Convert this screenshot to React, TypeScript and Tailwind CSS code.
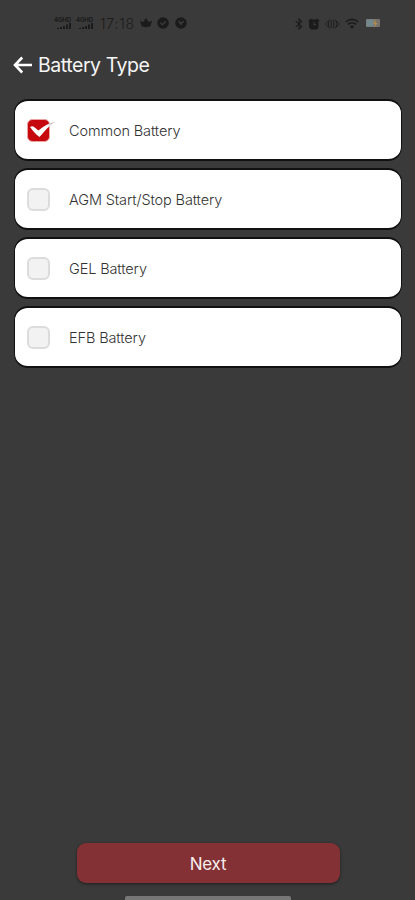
import React, { useState } from "react";

const BATTERY_TYPES = [
	{ id: "common", name: "Common Battery" },
	{ id: "agm", name: "AGM Start/Stop Battery" },
	{ id: "gel", name: "GEL Battery" },
	{ id: "efb", name: "EFB Battery" },
];

function SignalIcon({ label }: { label: string }) {
	return (
		<span className="flex w-[19px] flex-col items-center">
			<span className="h-[6px] text-[6px] font-bold leading-[6px] tracking-tight">{label}</span>
			<svg width="17" height="7" viewBox="0 0 17 7" fill="currentColor">
				<path d="M3 5h2v1H3zM6 4h2v2H6zM9 3h2v3H9zM12 1.5h2V6h-2zM15 0h2v6h-2z" />
			</svg>
		</span>
	);
}

function StatusBar() {
	return (
		<div className="flex h-[46px] items-center justify-between pl-[53px] pr-[34px] text-[#1b1b1b]">
			<div className="flex items-center">
				<SignalIcon label="4GHD" />
				<span className="w-[3px]" />
				<SignalIcon label="4GHD" />
				<span className="ml-[6px] w-[36px] whitespace-nowrap pt-[1px] text-[14px] font-light leading-none tracking-[0.8px]">17:18</span>
				<svg className="ml-[4px]" width="12" height="12" viewBox="0 0 12 12" fill="currentColor">
					<path d="M0 3.5l3 1.8L6 1l3 4.3 3-1.8-1.5 5.5q-4.5 2.6-9 0z" />
				</svg>
				<svg className="ml-[5px]" width="12" height="12" viewBox="0 0 12 12">
					<circle cx="6" cy="6" r="5.8" fill="currentColor" />
					<path d="M3.4 5.8l2 2 3.4-3.6" fill="none" stroke="#3b3b3b" strokeWidth="1.3" />
				</svg>
				<svg className="ml-[6px]" width="12" height="12" viewBox="0 0 12 12">
					<circle cx="6" cy="6" r="5.8" fill="currentColor" />
					<path d="M3.2 3l.5 2.4 2.6 3.4L7 6.5l2-1.6-1-1.7-1 2-1.8-.4z" fill="#3b3b3b" />
				</svg>
			</div>
			<div className="flex items-center pt-[1px]">
				<svg width="8" height="12" viewBox="0 0 8 12" fill="none" stroke="currentColor" strokeWidth="1.1">
					<path d="M.7 3.2l6 5.2L4 11V1l2.7 2.6-6 5.2" />
				</svg>
				<svg className="ml-[5px]" width="12" height="12" viewBox="0 0 12 12">
					<path d="M.5 2.5L3 .5l1 1h4l1-1 2.5 2-1 1.2v6L9 11.5H3L1 9.2V3.5z" fill="currentColor" />
					<path d="M6 4.3v2.4h2" fill="none" stroke="#3b3b3b" strokeWidth="1.2" />
				</svg>
				<svg className="ml-[5px]" width="15" height="12" viewBox="0 0 15 12" fill="none" stroke="currentColor" strokeWidth=".9">
					<path d="M3.5 2.8L.7 6l2.8 3.2M11.5 2.8L14.3 6l-2.8 3.2M5.2 10.5L3.6 9V3l1.6-1.5M9.8 1.5L11.4 3v6l-1.6 1.5M6.3 2v8M8.7 2v8" />
				</svg>
				<svg className="ml-[5px]" width="14" height="12" viewBox="0 0 14 12" fill="none" stroke="currentColor" strokeWidth="1.5">
					<path d="M.7 4Q7-1.2 13.3 4M2.8 6.4Q7 3 11.2 6.4" />
					<path d="M4.8 8.3Q7 6.6 9.2 8.3L7 11z" fill="currentColor" stroke="none" />
				</svg>
				<svg className="ml-[7px]" width="15" height="9" viewBox="0 0 15 9">
					<rect width="14" height="8" rx="1" fill="#77736c" />
					<rect x=".5" y=".5" width="7" height="7" fill="#73898d" />
					<path d="M9.5 0L7 5h2l-1 4 3.5-5h-2z" fill="#b38b4d" />
				</svg>
			</div>
		</div>
	);
}

function Checkbox({ checked }: { checked: boolean }) {
	if (!checked) {
		return <span className="block size-[23px] rounded-[6px] border-2 border-[#dcdcdc] bg-[#f2f2f2]" />;
	}

	return (
		<svg className="block overflow-visible" width="23" height="23" viewBox="0 0 23 23">
			<defs>
				<linearGradient id="tail" gradientUnits="userSpaceOnUse" x1="18" y1="8" x2="28" y2="2">
					<stop offset=".2" stopColor="#fff" />
					<stop offset=".6" stopColor="#cfc8c8" />
				</linearGradient>
			</defs>
			<rect x=".5" y=".5" width="22" height="22" rx="5" fill="#c5090e" stroke="#eaa3a3" />
			<path d="M3 8q3-2 5 .8l3.4 2.6Q19 5 28 2.5 19 9.5 12.5 18q-4-2.5-9.5-10z" fill="url(#tail)" />
		</svg>
	);
}

export default function App() {
	const [selected, setSelected] = useState("common");

	return (
		<div className="flex h-[900px] w-[415px] flex-col overflow-hidden bg-[#3a3a3a] font-['Inter',sans-serif]">
			<StatusBar />

			{/* Header */}
			<header className="flex h-[38px] items-center pl-[13px] text-white">
				<button aria-label="Back">
					<svg width="20" height="18" viewBox="0 0 20 18" fill="none" stroke="currentColor" strokeWidth="2.6">
						<path d="M9.2 1.5L2 9l7.2 7.5M2 9h17" />
					</svg>
				</button>
				<h1 className="ml-[5px] whitespace-nowrap pt-[2px] text-[19.5px] leading-none tracking-[-0.45px] text-[#f5f5f5]">Battery Type</h1>
			</header>

			{/* Battery list */}
			<main className="flex flex-col gap-[7px] px-[14px] pt-[15px]">
				{BATTERY_TYPES.map((battery) => (
					<button
						key={battery.id}
						onClick={() => setSelected(battery.id)}
						className="flex h-[62px] w-[388px] items-center rounded-[14px] border-x border-y-2 border-[#111] bg-white pl-[12px] text-left"
					>
						<Checkbox checked={selected === battery.id} />
						<span className="ml-[19px] whitespace-nowrap pt-[2px] text-[14.5px] font-light leading-none tracking-[-0.12px] text-[#333]">{battery.name}</span>
					</button>
				))}
			</main>

			{/* Footer */}
			<footer className="mt-auto flex flex-col items-center">
				<button className="ml-[1px] h-[40px] w-[263px] rounded-[9px] bg-[#843136] pt-[2px] text-[17px] leading-none tracking-[-0.3px] text-[#f7eeee] shadow-[0_1px_3px_rgba(0,0,0,0.5)]">
					Next
				</button>
				<div className="mt-[13px] h-[4px] w-[166px] rounded-t-[2px] bg-[#777]" />
			</footer>
		</div>
	);
}
